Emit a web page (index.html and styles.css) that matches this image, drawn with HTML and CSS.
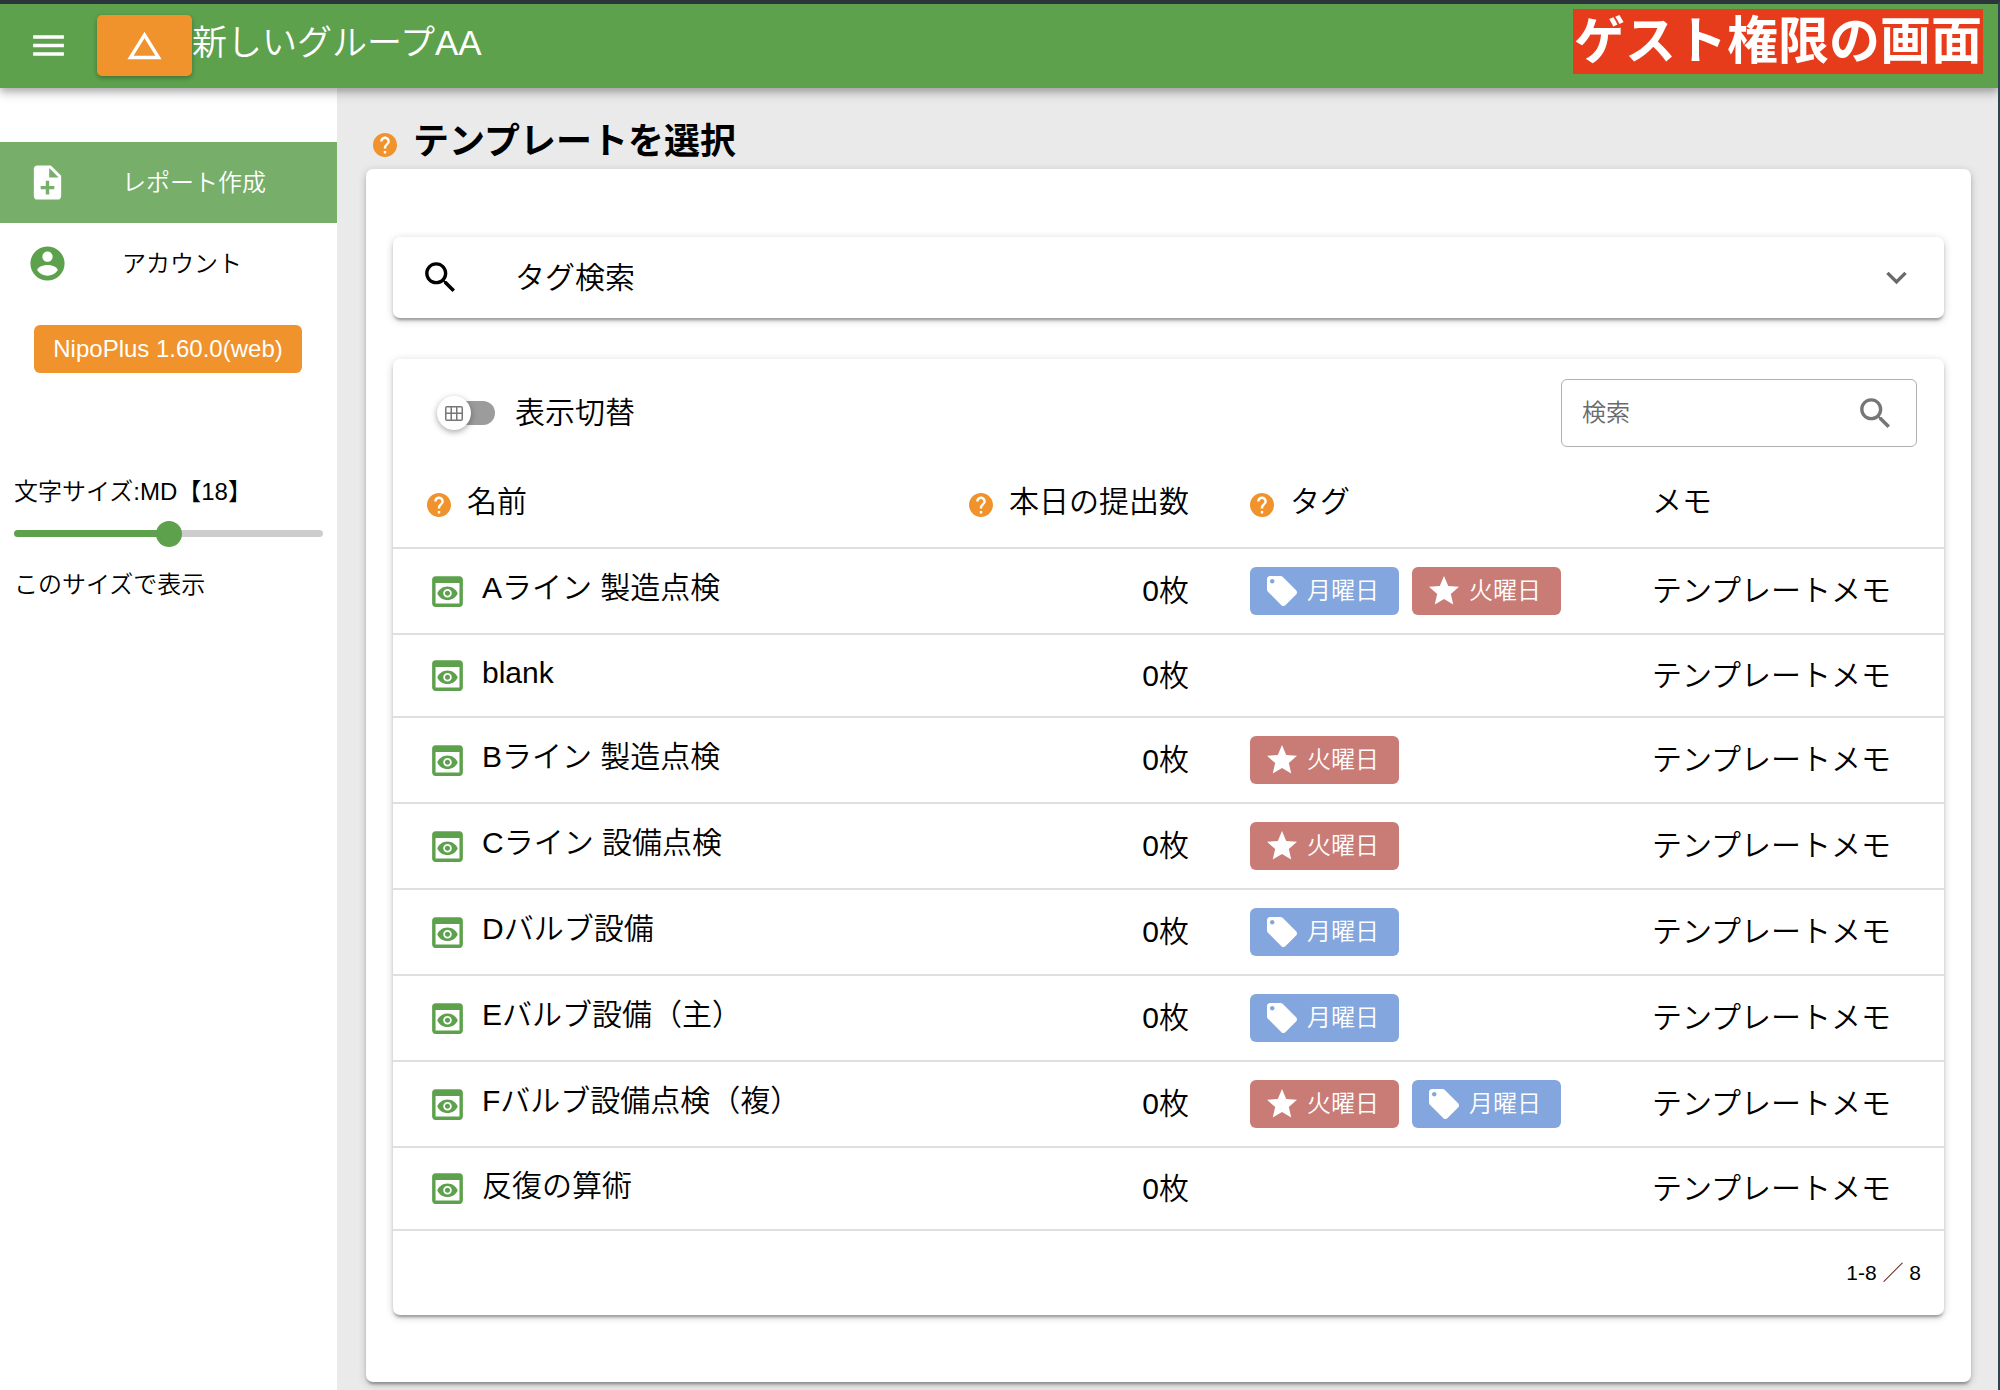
FILE: index.html
```html
<!DOCTYPE html>
<html lang="ja">
<head>
<meta charset="utf-8">
<meta name="viewport" content="width=device-width, initial-scale=1">
<title>テンプレートを選択</title>
<link rel="stylesheet" href="styles.css">
</head>
<body>
<svg class="sprite" aria-hidden="true">
  <symbol id="i-menu" viewBox="0 0 24 24"><path d="M3 18h18v-2H3v2zm0-5h18v-2H3v2zm0-7v2h18V6H3z"/></symbol>
  <symbol id="i-triangle" viewBox="0 0 24 24"><path d="M12 7.77L18.39 18H5.61L12 7.77M12 4L2 20h20L12 4z"/></symbol>
  <symbol id="i-note" viewBox="0 0 24 24"><path d="M14 2H6c-1.1 0-1.99.9-1.99 2L4 20c0 1.1.89 2 1.99 2H18c1.1 0 2-.9 2-2V8l-6-6zm2 14h-3v3h-2v-3H8v-2h3v-3h2v3h3v2zm-3-7V3.5L18.5 9H13z"/></symbol>
  <symbol id="i-account" viewBox="0 0 24 24"><path d="M12 2C6.48 2 2 6.48 2 12s4.48 10 10 10 10-4.48 10-10S17.52 2 12 2zm0 3c1.66 0 3 1.34 3 3s-1.34 3-3 3-3-1.34-3-3 1.34-3 3-3zm0 14.2c-2.5 0-4.71-1.28-6-3.22.03-1.99 4-3.08 6-3.08 1.99 0 5.97 1.09 6 3.08-1.29 1.94-3.5 3.22-6 3.22z"/></symbol>
  <symbol id="i-help" viewBox="2 2 20 20"><circle cx="12" cy="12" r="9" fill="#fff"/><path d="M12 2C6.48 2 2 6.48 2 12s4.48 10 10 10 10-4.48 10-10S17.52 2 12 2zm1 17h-2v-2h2v2zm2.07-7.75l-.9.92C13.45 12.9 13 13.5 13 15h-2v-.5c0-1.1.45-2.1 1.17-2.83l1.24-1.26c.37-.36.59-.86.59-1.41 0-1.1-.9-2-2-2s-2 .9-2 2H8c0-2.21 1.79-4 4-4s4 1.79 4 4c0 .88-.36 1.68-.93 2.25z"/></symbol>
  <symbol id="i-search" viewBox="0 0 24 24"><path d="M15.5 14h-.79l-.28-.27C15.41 12.59 16 11.11 16 9.5 16 5.91 13.09 3 9.5 3S3 5.91 3 9.5 5.91 16 9.5 16c1.61 0 3.09-.59 4.23-1.57l.27.28v.79l5 4.99L20.49 19l-4.99-5zm-6 0C7.01 14 5 11.99 5 9.5S7.01 5 9.5 5 14 7.01 14 9.5 11.99 14 9.5 14z"/></symbol>
  <symbol id="i-chevron" viewBox="0 0 24 24"><path d="M7.41 8.59L12 13.17l4.59-4.58L18 10l-6 6-6-6 1.41-1.41z"/></symbol>
  <symbol id="i-grid" viewBox="0 0 18 15"><path fill-rule="evenodd" d="M2 0h14a2 2 0 0 1 2 2v11a2 2 0 0 1-2 2H2a2 2 0 0 1-2-2V2a2 2 0 0 1 2-2zM1.5 1.5v5h4v-5zm5.5 0v5h4v-5zm5.5 0v5h4v-5zM1.5 8v5.5h4V8zM7 8v5.5h4V8zm5.5 0v5.5h4V8z"/></symbol>
  <symbol id="i-preview" viewBox="0 0 24 24"><path d="M19 3H5c-1.11 0-2 .9-2 2v14c0 1.1.89 2 2 2h14c1.1 0 2-.9 2-2V5c0-1.1-.89-2-2-2zm0 16H5V7h14v12zm-5.5-6c0 .83-.67 1.5-1.5 1.5s-1.5-.67-1.5-1.5.67-1.5 1.5-1.5 1.5.67 1.5 1.5zM12 9c-2.73 0-5.06 1.66-6 4 .94 2.34 3.27 4 6 4s5.06-1.66 6-4c-.94-2.34-3.27-4-6-4zm0 6.5c-1.38 0-2.5-1.12-2.5-2.5s1.12-2.5 2.5-2.5 2.5 1.12 2.5 2.5-1.12 2.5-2.5 2.5z"/></symbol>
  <symbol id="i-tag" viewBox="0 0 24 24"><path d="M21.41 11.58l-9-9C12.05 2.22 11.55 2 11 2H4c-1.1 0-2 .9-2 2v7c0 .55.22 1.05.59 1.42l9 9c.36.36.86.58 1.41.58.55 0 1.05-.22 1.41-.59l7-7c.37-.36.59-.86.59-1.41 0-.55-.23-1.06-.59-1.42zM5.5 7C4.67 7 4 6.33 4 5.5S4.67 4 5.5 4 7 4.67 7 5.5 6.33 7 5.5 7z"/></symbol>
  <symbol id="i-star" viewBox="0 0 24 24"><path d="M12 17.27L18.18 21l-1.64-7.03L22 9.24l-7.19-.61L12 2 9.19 8.63 2 9.24l5.46 4.73L5.82 21z"/></symbol>
</svg>

<header class="topbar">
  <button class="menu-button" type="button" aria-label="メニュー"><svg class="icon"><use href="#i-menu"/></svg></button>
  <button class="group-button" type="button" aria-label="グループ"><svg class="icon"><use href="#i-triangle"/></svg></button>
  <div class="group-name">新しいグループAA</div>
  <div class="role-label">ゲスト権限の画面</div>
</header>

<div class="layout">
  <aside class="sidebar">
    <nav class="nav">
      <a class="nav-item nav-item-active" href="#"><svg class="icon"><use href="#i-note"/></svg>レポート作成</a>
      <a class="nav-item" href="#"><svg class="icon"><use href="#i-account"/></svg>アカウント</a>
    </nav>
    <div class="version">NipoPlus 1.60.0(web)</div>
    <div class="font-size">
      <label for="size">文字サイズ:MD【18】</label>
      <input class="slider" id="size" type="range" min="0" max="4" value="2">
      <p class="sample">このサイズで表示</p>
    </div>
  </aside>

  <main class="main">
    <h1 class="page-title"><svg class="help"><use href="#i-help"/></svg><span class="raised">テンプレートを選択</span></h1>
    <section class="panel">
      <button class="card tag-search" type="button" aria-expanded="false">
        <svg class="icon"><use href="#i-search"/></svg>
        <span class="tag-search-label">タグ検索</span>
        <svg class="icon chevron"><use href="#i-chevron"/></svg>
      </button>

      <div class="card">
        <div class="toolbar">
          <label class="toggle">
            <span class="switch">
              <input class="switch-input" type="checkbox" role="switch">
              <span class="switch-thumb"><svg class="grid-icon"><use href="#i-grid"/></svg></span>
            </span>
            表示切替
          </label>
          <div class="search">
            <input class="search-input" type="text" placeholder="検索" aria-label="検索">
            <svg class="icon"><use href="#i-search"/></svg>
          </div>
        </div>

        <table class="templates">
          <colgroup><col><col class="col-count"><col class="col-tags"><col class="col-memo"></colgroup>
          <thead>
            <tr>
              <th scope="col"><span class="head"><svg class="help"><use href="#i-help"/></svg><span class="raised">名前</span></span></th>
              <th scope="col" class="count"><span class="head head-end"><svg class="help"><use href="#i-help"/></svg><span class="raised">本日の提出数</span></span></th>
              <th scope="col"><span class="head"><svg class="help"><use href="#i-help"/></svg><span class="raised">タグ</span></span></th>
              <th scope="col"><span class="head"><span class="raised">メモ</span></span></th>
            </tr>
          </thead>
          <tbody>
            <tr class="tagged">
              <td><span class="name"><svg class="icon"><use href="#i-preview"/></svg><span class="raised">Aライン 製造点検</span></span></td>
              <td class="count">0枚</td>
              <td><span class="chips"><span class="chip chip-mon"><svg><use href="#i-tag"/></svg>月曜日</span><span class="chip chip-tue"><svg><use href="#i-star"/></svg>火曜日</span></span></td>
              <td>テンプレートメモ</td>
            </tr>
            <tr>
              <td><span class="name"><svg class="icon"><use href="#i-preview"/></svg><span class="raised">blank</span></span></td>
              <td class="count">0枚</td>
              <td></td>
              <td>テンプレートメモ</td>
            </tr>
            <tr class="tagged">
              <td><span class="name"><svg class="icon"><use href="#i-preview"/></svg><span class="raised">Bライン 製造点検</span></span></td>
              <td class="count">0枚</td>
              <td><span class="chips"><span class="chip chip-tue"><svg><use href="#i-star"/></svg>火曜日</span></span></td>
              <td>テンプレートメモ</td>
            </tr>
            <tr class="tagged">
              <td><span class="name"><svg class="icon"><use href="#i-preview"/></svg><span class="raised">Cライン 設備点検</span></span></td>
              <td class="count">0枚</td>
              <td><span class="chips"><span class="chip chip-tue"><svg><use href="#i-star"/></svg>火曜日</span></span></td>
              <td>テンプレートメモ</td>
            </tr>
            <tr class="tagged">
              <td><span class="name"><svg class="icon"><use href="#i-preview"/></svg><span class="raised">Dバルブ設備</span></span></td>
              <td class="count">0枚</td>
              <td><span class="chips"><span class="chip chip-mon"><svg><use href="#i-tag"/></svg>月曜日</span></span></td>
              <td>テンプレートメモ</td>
            </tr>
            <tr class="tagged">
              <td><span class="name"><svg class="icon"><use href="#i-preview"/></svg><span class="raised">Eバルブ設備（主）</span></span></td>
              <td class="count">0枚</td>
              <td><span class="chips"><span class="chip chip-mon"><svg><use href="#i-tag"/></svg>月曜日</span></span></td>
              <td>テンプレートメモ</td>
            </tr>
            <tr class="tagged">
              <td><span class="name"><svg class="icon"><use href="#i-preview"/></svg><span class="raised">Fバルブ設備点検（複）</span></span></td>
              <td class="count">0枚</td>
              <td><span class="chips"><span class="chip chip-tue"><svg><use href="#i-star"/></svg>火曜日</span><span class="chip chip-mon"><svg><use href="#i-tag"/></svg>月曜日</span></span></td>
              <td>テンプレートメモ</td>
            </tr>
            <tr>
              <td><span class="name"><svg class="icon"><use href="#i-preview"/></svg><span class="raised">反復の算術</span></span></td>
              <td class="count">0枚</td>
              <td></td>
              <td>テンプレートメモ</td>
            </tr>
          </tbody>
        </table>
        <div class="pager">1-8 ／ 8</div>
      </div>
    </section>
  </main>
</div>
</body>
</html>
```
FILE: styles.css
```css
:root {
  --green: #5da14d;
  --orange: #f0932d;
  --line: #dfdfdf;
  --shadow: 0 2px 9px rgba(0, 0, 0, .2), 0 3px 3px rgba(0, 0, 0, .14), 0 4px 2px -2px rgba(0, 0, 0, .16);
}

* {
  box-sizing: border-box;
}

body {
  margin: 0;
  min-height: 100vh;
  display: flex;
  flex-direction: column;
  border-top: 4px solid #2a363c;
  border-right: 2px solid #2a4450;
  background: #eaeaea;
  color: #000;
  font-family: "Liberation Sans", "Noto Sans CJK JP", sans-serif;
  font-size: 30px;
  font-weight: 350;
  line-height: 40px;
}

button,
input {
  font: inherit;
  color: inherit;
}

button {
  border: 0;
  padding: 0;
  background: none;
}

.sprite {
  position: absolute;
  width: 0;
  height: 0;
}

svg {
  display: block;
  flex: none;
  fill: currentColor;
}

.icon {
  width: 41px;
  height: 41px;
}

.help {
  width: 24px;
  height: 24px;
  color: var(--orange);
}

/* Top bar */

.topbar {
  position: relative;
  z-index: 1;
  display: flex;
  align-items: center;
  height: 84px;
  padding: 0 15px 2px 28px;
  background: var(--green);
  color: #fff;
  box-shadow: 0 3px 7px rgba(0, 0, 0, .24), 0 7px 10px rgba(0, 0, 0, .12);
}

.group-button {
  display: grid;
  place-items: center;
  width: 95px;
  height: 61px;
  margin-left: 28px;
  border-radius: 5px;
  background: var(--orange);
  box-shadow: 0 2px 5px rgba(0, 0, 0, .3);
}

.group-name {
  flex: 1;
  padding-bottom: 4px;
  font-size: 35px;
}

.role-label {
  align-self: flex-start;
  margin-top: 5px;
  padding: 0 1px;
  background: #e73c1c;
  font-size: 51px;
  font-weight: 700;
  line-height: 65px;
}

/* Sidebar */

.layout {
  flex: 1;
  display: flex;
}

.sidebar {
  flex: none;
  width: 337px;
  padding-top: 54px;
  background: #fff;
  font-size: 24px;
}

.nav-item {
  display: flex;
  align-items: center;
  gap: 54px;
  height: 81px;
  padding-left: 27px;
  color: #000;
  text-decoration: none;
}

.nav-item .icon {
  color: var(--green);
}

.nav-item-active,
.nav-item-active .icon {
  color: #fff;
}

.nav-item-active {
  background: #76ae6a;
}

.version {
  margin: 21px 35px 0 34px;
  border-radius: 6px;
  background: var(--orange);
  color: #fff;
  line-height: 48px;
  text-align: center;
}

.font-size {
  display: flex;
  flex-direction: column;
  padding: 99px 14px 0;
}

.slider {
  appearance: none;
  width: 100%;
  height: 26px;
  margin: 8px 0 19px;
  background: none;
}

.slider::-webkit-slider-runnable-track {
  height: 7px;
  border-radius: 4px;
  background: linear-gradient(90deg, var(--green) 50%, #cdcdcd 50%);
}

.slider::-webkit-slider-thumb {
  appearance: none;
  width: 26px;
  height: 26px;
  margin-top: -9px;
  border-radius: 50%;
  background: var(--green);
}

.sample {
  margin: 0;
}

/* Main area */

.main {
  flex: 1;
  min-width: 0;
  padding: 0 27px 9px 29px;
}

.page-title {
  display: flex;
  align-items: center;
  gap: 16px;
  margin: 0;
  padding: 34px 0 1px 7px;
  font-size: 36px;
  font-weight: 700;
}

.panel {
  display: flex;
  flex-direction: column;
  gap: 41px;
  padding: 68px 27px 67px;
  border-radius: 7px;
  background: #fff;
  box-shadow: var(--shadow);
}

.card {
  border-radius: 7px;
  background: #fff;
  box-shadow: var(--shadow);
}

.tag-search {
  display: flex;
  align-items: center;
  height: 81px;
  padding: 0 27px;
  text-align: left;
}

.tag-search-label {
  flex: 1;
  padding-left: 54px;
}

.chevron {
  color: #6a6a6a;
}

.toolbar {
  display: flex;
  align-items: center;
  justify-content: space-between;
  padding: 20px 27px 16px 44px;
}

.toggle {
  display: flex;
  align-items: center;
  gap: 20px;
}

.switch {
  display: grid;
  align-items: center;
  width: 58px;
  height: 34px;
}

.switch > * {
  grid-area: 1 / 1;
}

.switch-input {
  appearance: none;
  height: 24px;
  margin: 0 0 0 4px;
  border-radius: 12px;
  background: #9c9c9c;
}

.switch-thumb {
  z-index: 1;
  display: grid;
  place-items: center;
  width: 34px;
  height: 34px;
  border-radius: 50%;
  background: #fff;
  color: #777;
  box-shadow: 0 2px 6px rgba(0, 0, 0, .35);
}

.grid-icon {
  width: 18px;
  height: 15px;
}

.search {
  display: flex;
  align-items: center;
  width: 356px;
  height: 68px;
  padding: 0 20px;
  border: 1px solid #b0b0b0;
  border-radius: 6px;
  color: #767676;
}

.search-input {
  flex: 1;
  min-width: 0;
  padding: 0;
  border: 0;
  outline: 0;
  background: none;
  font-size: 24px;
}

.search-input::placeholder {
  color: #6a6a6a;
  opacity: 1;
}

/* Template table */

.templates {
  width: 100%;
  table-layout: fixed;
  border-collapse: collapse;
}

.col-count {
  width: 304px;
}

.col-tags {
  width: 402px;
}

.col-memo {
  width: 322px;
}

.templates th,
.templates td {
  height: 83px;
  padding: 0 30px;
  border-bottom: 2px solid var(--line);
  font-weight: inherit;
  text-align: left;
  white-space: nowrap;
}

.templates th {
  height: 85px;
}

.templates .tagged td {
  height: 86px;
}

.templates th:first-child,
.templates td:first-child {
  padding-left: 34px;
}

.templates .count {
  padding-right: 31px;
  text-align: right;
}

.head,
.name,
.chips {
  display: flex;
  align-items: center;
}

.head {
  gap: 16px;
}

.head-end {
  justify-content: flex-end;
}

.name {
  gap: 14px;
}

.name .icon {
  color: var(--green);
}

.raised {
  padding-bottom: 6px;
}

.chips {
  gap: 13px;
}

.chip {
  display: flex;
  align-items: center;
  gap: 7px;
  height: 48px;
  padding: 0 20px 0 14px;
  border-radius: 6px;
  color: #fff;
  font-size: 24px;
}

.chip svg {
  width: 36px;
  height: 36px;
}

.chip-mon {
  background: #82a6dd;
}

.chip-tue {
  background: #c97c75;
}

.pager {
  padding: 22px 23px;
  font-size: 21px;
  text-align: right;
}
```
